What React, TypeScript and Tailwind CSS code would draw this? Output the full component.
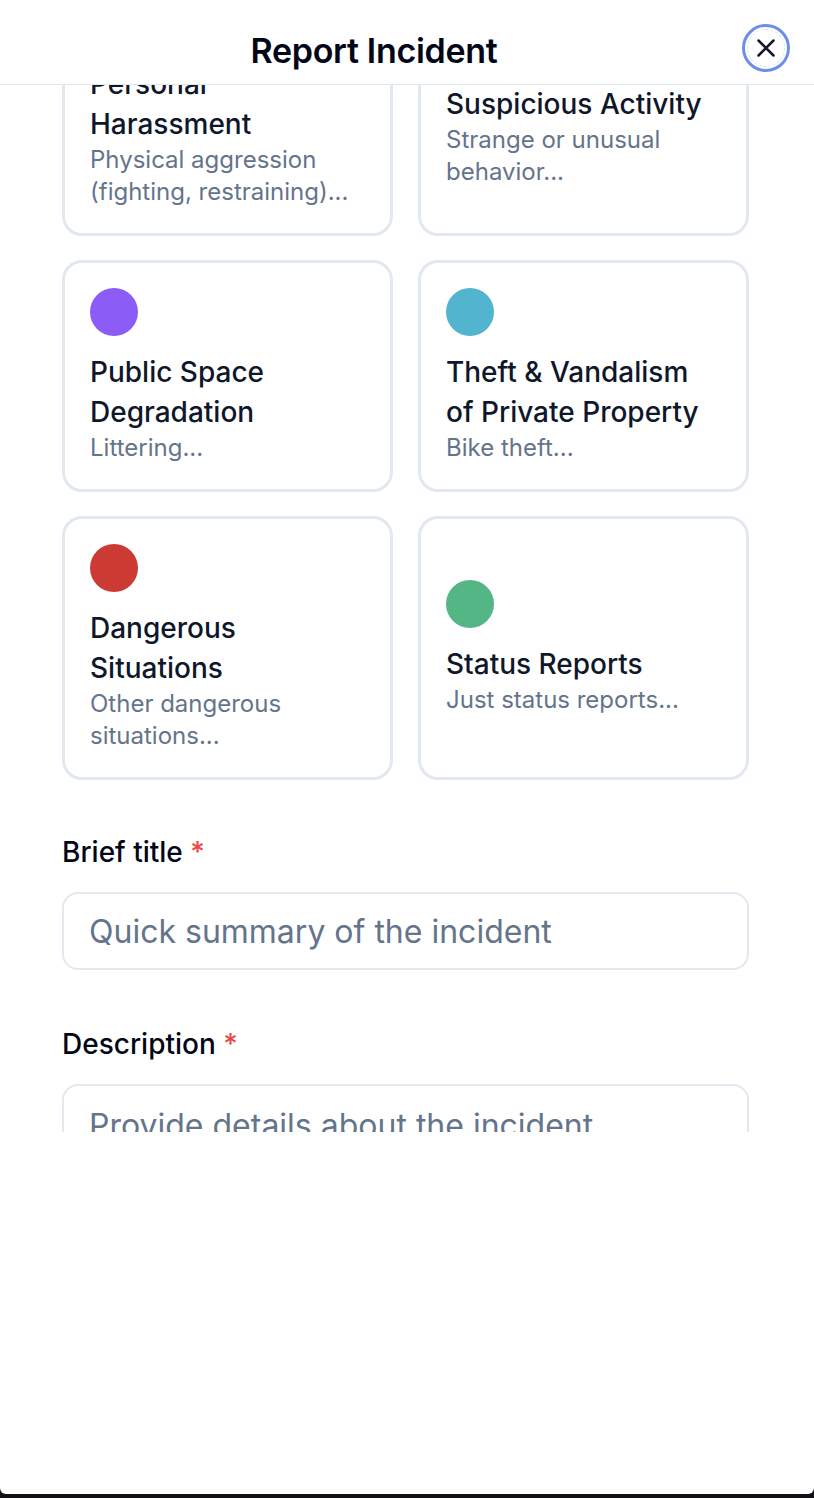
import { useEffect, useRef } from 'react';

type Category = {
  id: string;
  title: string;
  description: string;
  color: string;
};

const categories: Category[] = [
  { id: 'harassment', title: 'Personal Harassment', description: 'Physical aggression (fighting, restraining)...', color: 'bg-[#f59e0b]' },
  { id: 'suspicious', title: 'Suspicious Activity', description: 'Strange or unusual behavior...', color: 'bg-[#f97316]' },
  { id: 'public-space', title: 'Public Space Degradation', description: 'Littering...', color: 'bg-[#8b5cf6]' },
  { id: 'theft', title: 'Theft & Vandalism of Private Property', description: 'Bike theft...', color: 'bg-[#53b4cf]' },
  { id: 'dangerous', title: 'Dangerous Situations', description: 'Other dangerous situations...', color: 'bg-[#cb3b33]' },
  { id: 'status', title: 'Status Reports', description: 'Just status reports...', color: 'bg-[#55b685]' },
];

function CategoryCard({ category }: { category: Category }) {
  return (
    <button
      type="button"
      className="flex flex-col items-start justify-center rounded-[20px] border-[3px] border-[#e2e8f0] bg-white px-[25px] py-[25px] text-left"
    >
      <span className={`h-12 w-12 shrink-0 rounded-full ${category.color}`} />
      <span className="mt-4 text-[28px] font-medium leading-[40px] text-[#0f172a]">{category.title}</span>
      <span className="text-[24px] leading-[32px] text-[#64748b]">{category.description}</span>
    </button>
  );
}

export default function App() {
  const scrollRef = useRef<HTMLDivElement>(null);

  useEffect(() => {
    if (scrollRef.current) scrollRef.current.scrollTop = 137;
  }, []);

  return (
    <div className="min-h-[1498px] bg-[#0f1115] font-['Inter','Noto_Sans',sans-serif]">
      <div className="flex h-[1494px] flex-col rounded-b-[6px] bg-white">
        <header className="flex h-[85px] shrink-0 items-center border-b border-[#e2e8f0] pr-6 pt-3">
          <h1 className="flex-1 pl-[6px] pt-1 text-center text-[34px] font-semibold tracking-[-0.3px] text-[#020617]">
            Report Incident
          </h1>
          <button
            type="button"
            aria-label="Close"
            className="flex h-12 w-12 items-center justify-center rounded-full border-[3px] border-[#6e8fe9] bg-white"
          >
            <span className="flex h-[38px] w-[38px] items-center justify-center rounded-full border border-dashed border-[#dbe4f5]">
              <svg width="30" height="30" viewBox="0 0 24 24" fill="none" stroke="#111827" strokeWidth="2" strokeLinecap="round">
                <path d="M18 6L6 18M6 6l12 12" />
              </svg>
            </span>
          </button>
        </header>

        <div ref={scrollRef} className="h-[1047px] shrink-0 overflow-hidden">
          <div className="pb-10 pl-[62px] pr-[65px] pt-6">
            <div className="grid grid-cols-2 gap-x-[25px] gap-y-[24px]">
              {categories.map((c) => (
                <CategoryCard key={c.id} category={c} />
              ))}
            </div>

            <div className="mt-[56px]">
              <label className="block text-[28px] font-medium leading-[32px] text-[#020617]">
                Brief title <span className="text-[#ef4444]">*</span>
              </label>
              <input
                type="text"
                placeholder="Quick summary of the incident"
                className="mt-6 h-[78px] w-full rounded-[16px] border-2 border-[#e2e8f0] px-[25px] text-[32px] text-[#0f172a] outline-none placeholder:text-[#64748b]"
              />
            </div>

            <div className="mt-[58px]">
              <label className="block text-[28px] font-medium leading-[32px] text-[#020617]">
                Description <span className="text-[#ef4444]">*</span>
              </label>
              <textarea
                placeholder="Provide details about the incident"
                rows={4}
                className="mt-6 w-full resize-none rounded-[16px] border-2 border-[#e2e8f0] px-[25px] py-[20px] text-[32px] leading-[40px] text-[#0f172a] outline-none placeholder:text-[#64748b]"
              />
            </div>
          </div>
        </div>
      </div>
    </div>
  );
}
